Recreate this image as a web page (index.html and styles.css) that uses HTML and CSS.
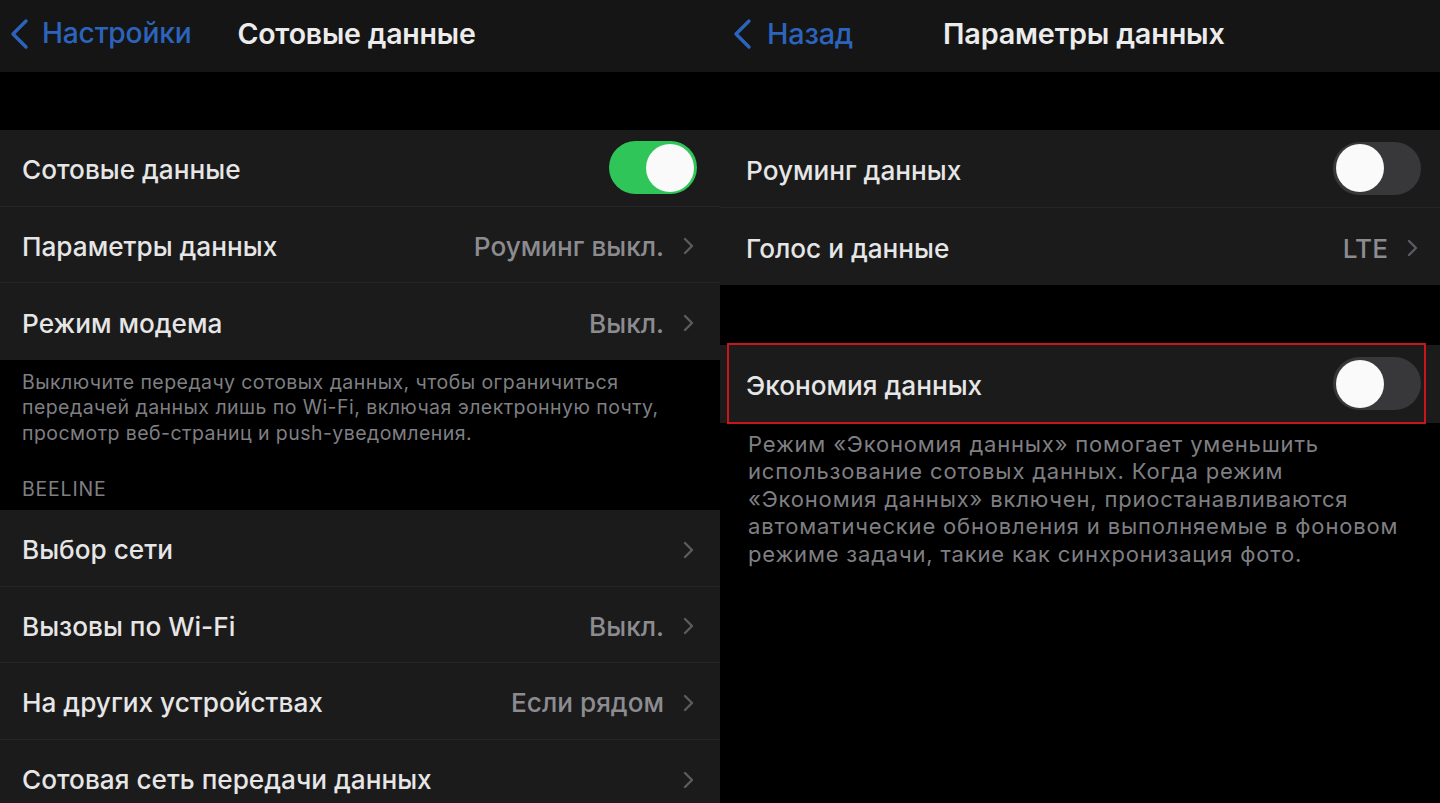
FILE: index.html
```html
<!DOCTYPE html>
<html lang="ru">
<head>
<meta charset="utf-8">
<title>Сотовые данные</title>
<link rel="stylesheet" href="styles.css">
</head>
<body>
<div class="screens">
  <section class="panel">
    <header class="nav">
      <a class="back">
        <svg class="back-chev" width="22" height="32" viewBox="0 0 22 32"><polyline points="18,3 5,16 18,29" fill="none" stroke="currentColor" stroke-width="3.4" stroke-linecap="round" stroke-linejoin="round"/></svg>
        <span>Настройки</span>
      </a>
      <h1 class="title title-left">Сотовые данные</h1>
    </header>
    <div class="gap-top"></div>
    <div class="group">
      <div class="row">
        <span class="label">Сотовые данные</span>
        <span class="toggle on"><span class="knob"></span></span>
      </div>
      <div class="row">
        <span class="label">Параметры данных</span>
        <span class="value">Роуминг выкл.</span>
        <svg class="chev" width="12" height="20" viewBox="0 0 12 20"><polyline points="3,3 10,10 3,17" fill="none" stroke="currentColor" stroke-width="2.4" stroke-linecap="round" stroke-linejoin="round"/></svg>
      </div>
      <div class="row">
        <span class="label">Режим модема</span>
        <span class="value">Выкл.</span>
        <svg class="chev" width="12" height="20" viewBox="0 0 12 20"><polyline points="3,3 10,10 3,17" fill="none" stroke="currentColor" stroke-width="2.4" stroke-linecap="round" stroke-linejoin="round"/></svg>
      </div>
    </div>
    <p class="footer footer-left">Выключите передачу сотовых данных, чтобы ограничиться<br>передачей данных лишь по Wi-Fi, включая электронную почту,<br>просмотр веб-страниц и push-уведомления.</p>
    <div class="section-head">BEELINE</div>
    <div class="group">
      <div class="row">
        <span class="label">Выбор сети</span>
        <span class="value"></span>
        <svg class="chev" width="12" height="20" viewBox="0 0 12 20"><polyline points="3,3 10,10 3,17" fill="none" stroke="currentColor" stroke-width="2.4" stroke-linecap="round" stroke-linejoin="round"/></svg>
      </div>
      <div class="row">
        <span class="label">Вызовы по Wi-Fi</span>
        <span class="value">Выкл.</span>
        <svg class="chev" width="12" height="20" viewBox="0 0 12 20"><polyline points="3,3 10,10 3,17" fill="none" stroke="currentColor" stroke-width="2.4" stroke-linecap="round" stroke-linejoin="round"/></svg>
      </div>
      <div class="row">
        <span class="label">На других устройствах</span>
        <span class="value">Если рядом</span>
        <svg class="chev" width="12" height="20" viewBox="0 0 12 20"><polyline points="3,3 10,10 3,17" fill="none" stroke="currentColor" stroke-width="2.4" stroke-linecap="round" stroke-linejoin="round"/></svg>
      </div>
      <div class="row">
        <span class="label">Сотовая сеть передачи данных</span>
        <span class="value"></span>
        <svg class="chev" width="12" height="20" viewBox="0 0 12 20"><polyline points="3,3 10,10 3,17" fill="none" stroke="currentColor" stroke-width="2.4" stroke-linecap="round" stroke-linejoin="round"/></svg>
      </div>
    </div>
  </section>

  <section class="panel panel-right">
    <header class="nav nav-right">
      <a class="back">
        <svg class="back-chev" width="22" height="32" viewBox="0 0 22 32"><polyline points="18,3 5,16 18,29" fill="none" stroke="currentColor" stroke-width="3.4" stroke-linecap="round" stroke-linejoin="round"/></svg>
        <span>Назад</span>
      </a>
      <h1 class="title title-right">Параметры данных</h1>
    </header>
    <div class="gap-top"></div>
    <div class="group">
      <div class="row row-r">
        <span class="label">Роуминг данных</span>
        <span class="toggle"><span class="knob"></span></span>
      </div>
      <div class="row row-r">
        <span class="label">Голос и данные</span>
        <span class="value">LTE</span>
        <svg class="chev" width="12" height="20" viewBox="0 0 12 20"><polyline points="3,3 10,10 3,17" fill="none" stroke="currentColor" stroke-width="2.4" stroke-linecap="round" stroke-linejoin="round"/></svg>
      </div>
    </div>
    <div class="gap-mid"></div>
    <div class="group">
      <div class="row row-r highlighted">
        <span class="label">Экономия данных</span>
        <span class="toggle"><span class="knob"></span></span>
      </div>
    </div>
    <p class="footer footer-right">Режим «Экономия данных» помогает уменьшить<br>использование сотовых данных. Когда режим<br>«Экономия данных» включен, приостанавливаются<br>автоматические обновления и выполняемые в фоновом<br>режиме задачи, такие как синхронизация фото.</p>
  </section>
</div>
</body>
</html>
```

FILE: styles.css
```css
* { box-sizing: border-box; }
html, body {
  margin: 0;
  padding: 0;
  background: #000;
  width: 1440px;
  height: 803px;
  overflow: hidden;
  font-family: Inter, "Noto Sans", "Liberation Sans", sans-serif;
  -webkit-font-smoothing: antialiased;
}
.screens {
  display: flex;
  width: 1440px;
  height: 803px;
}
.panel {
  width: 720px;
  height: 803px;
  display: flex;
  flex-direction: column;
  background: #000;
  overflow: hidden;
}
.nav {
  height: 72px;
  background: #151515;
  display: flex;
  align-items: center;
  flex-shrink: 0;
  padding-bottom: 6px;
}
.nav-right { padding-left: 3px; }
.back {
  display: flex;
  align-items: center;
  color: #2c64bd;
  font-size: 28.2px;
  font-weight: 500;
  padding-left: 8px;
  gap: 12px;
  letter-spacing: -0.2px;
}
.nav-right .back { gap: 14px; font-size: 28.8px; }
.back-chev { margin-top: 1px; }
.title {
  margin: 0;
  color: #ececec;
  font-size: 28.5px;
  font-weight: 600;
  letter-spacing: -0.2px;
}
.title-left { margin-left: 46px; }
.title-right { margin-left: 90px; font-size: 28.8px; }
.gap-top { height: 58px; flex-shrink: 0; }
.gap-mid { height: 60px; flex-shrink: 0; }
.group {
  background: #1b1b1c;
  flex-shrink: 0;
}
.row {
  height: 76.5px;
  display: flex;
  align-items: center;
  padding: 4px 26px 0 22px;
  position: relative;
  border-bottom: 1px solid #252527;
}
.row:last-child { border-bottom: none; }
.row-r { padding-left: 26px; padding-right: 22px; height: 77.5px; }
.label {
  flex: 1;
  color: #e6e6e6;
  font-size: 26.2px;
  font-weight: 500;
  letter-spacing: 0;
}
.value {
  color: #8c8c90;
  font-size: 26.2px;
  font-weight: 500;
  letter-spacing: 0;
  margin-right: 18px;
}
.chev { color: #5c5c60; }
.toggle {
  width: 88px;
  height: 53px;
  border-radius: 27px;
  background: #38383b;
  display: flex;
  align-items: center;
  padding: 3px;
  margin-right: -3px;
  margin-top: -4px;
}
.toggle .knob {
  width: 48px;
  height: 48px;
  border-radius: 50%;
  background: #fafafa;
}
.toggle.on {
  background: #30c558;
  justify-content: flex-end;
}
.footer {
  margin: 0;
  color: #7f7f83;
  font-weight: 400;
}
.footer-left {
  font-size: 19.5px;
  line-height: 25.5px;
  padding: 10px 0 0 22px;
  letter-spacing: 0.45px;
  white-space: nowrap;
}
.section-head {
  color: #7f7f83;
  font-size: 19.5px;
  letter-spacing: 0.8px;
  padding: 32px 0 10px 22px;
  line-height: 22px;
}
.footer-right {
  font-size: 22px;
  line-height: 27.6px;
  padding: 8px 0 0 28px;
  letter-spacing: 0.82px;
  white-space: nowrap;
}
.highlighted::after {
  content: "";
  position: absolute;
  top: -2px;
  bottom: -1px;
  left: 7px;
  right: 14px;
  border: 2.5px solid #c8161c;
  pointer-events: none;
}
```
